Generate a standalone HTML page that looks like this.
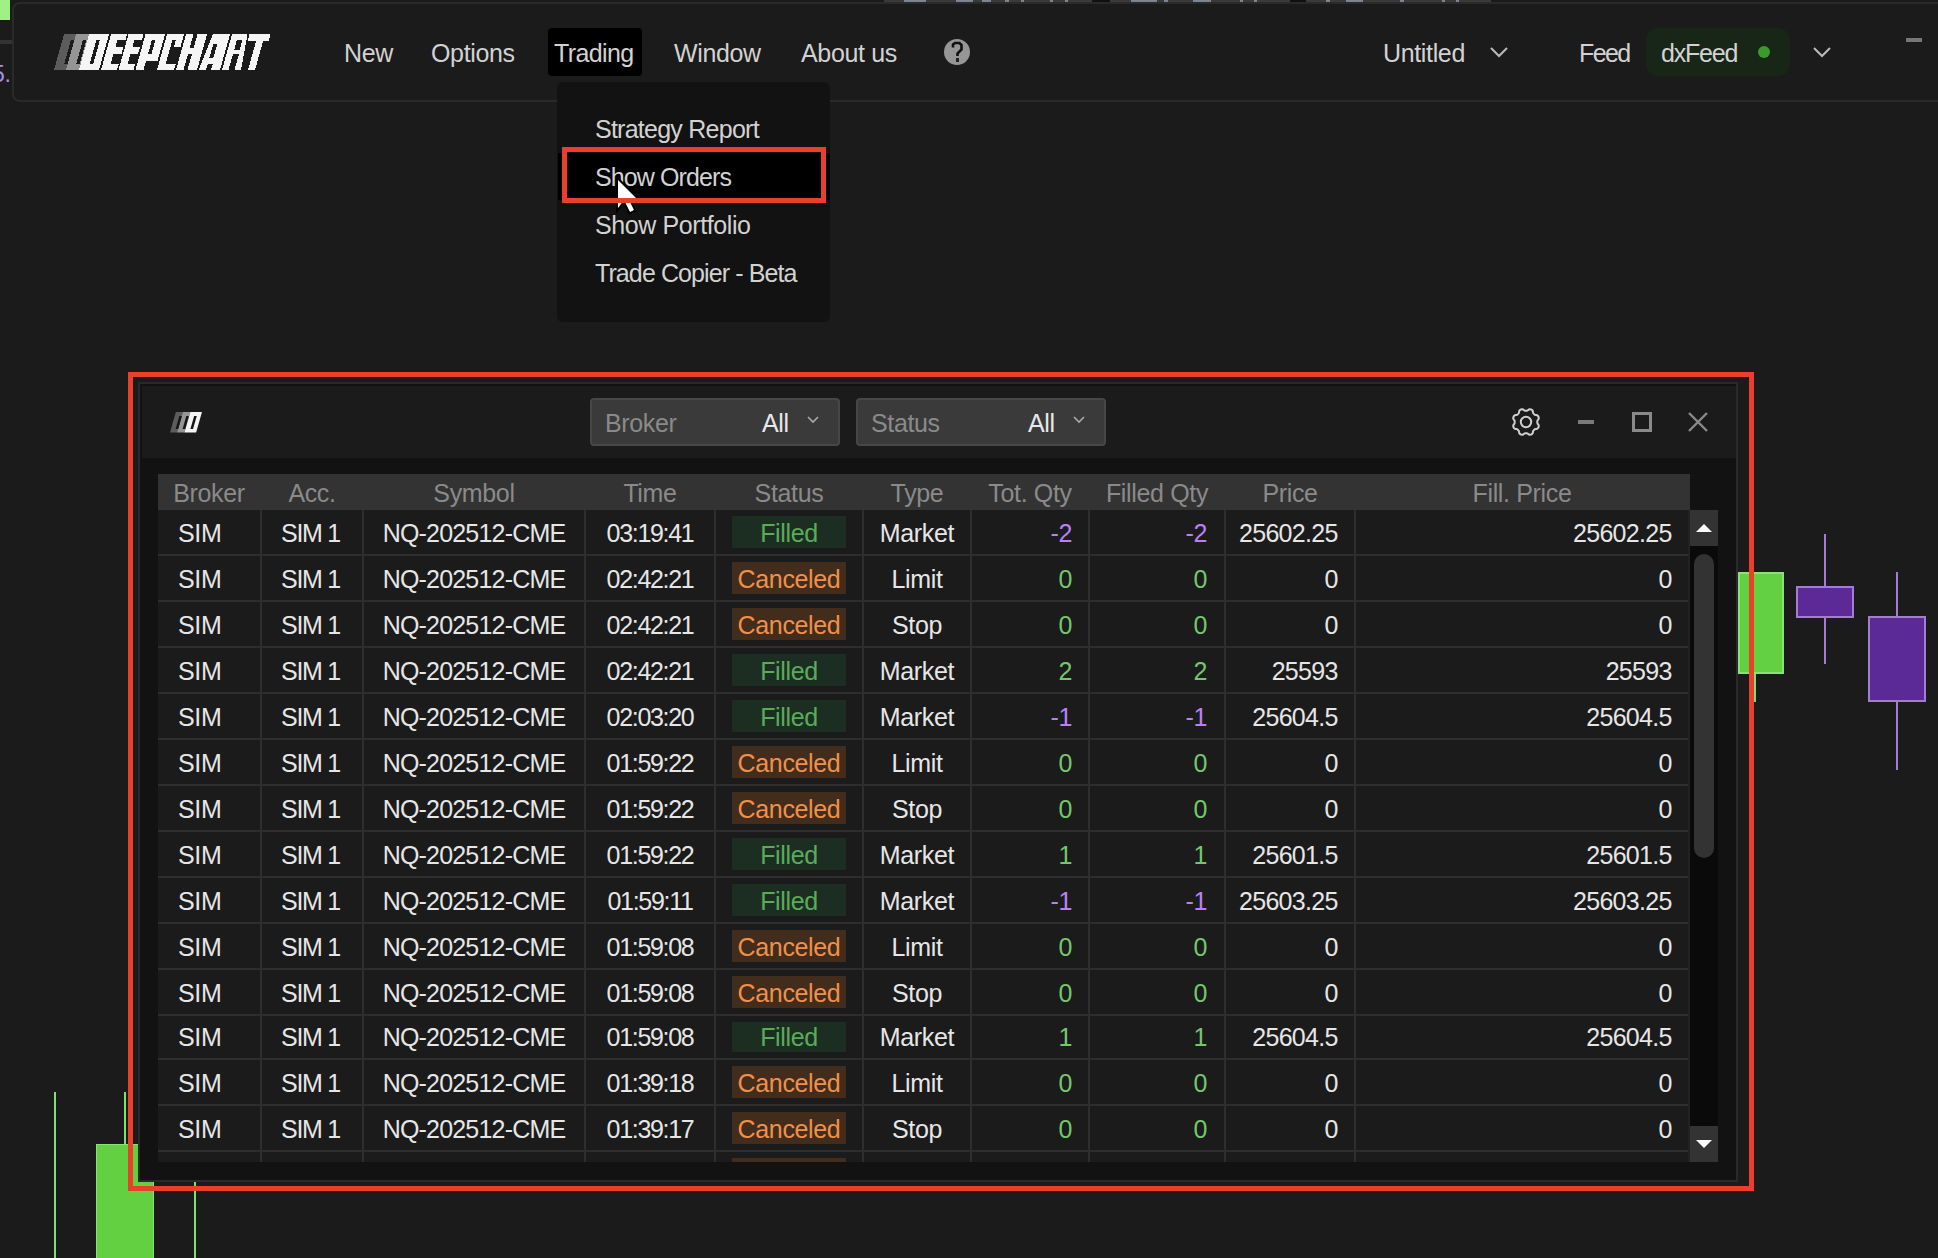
<!DOCTYPE html>
<html><head><meta charset="utf-8">
<style>
*{margin:0;padding:0;box-sizing:border-box}
html,body{width:1938px;height:1258px;overflow:hidden;background:#1b1b1b;font-family:"Liberation Sans",sans-serif;}
.a{position:absolute}
.t{position:absolute;white-space:nowrap;font-size:25px;line-height:28px;letter-spacing:-0.35px}
#topbar{left:12px;top:2px;width:1940px;height:100px;border:2px solid #2a2a2a;border-radius:8px;background:#1b1b1b}
.menu{color:#d2d2d2}
</style></head><body>

<!-- left edge bits -->
<div class="a" style="left:0;top:0;width:10px;height:20px;background:#a0f088"></div>
<div class="a" style="left:0;top:40px;width:12px;height:4px;background:#333"></div>
<div class="t" style="left:-8px;top:60px;color:#a890e0;font-size:23px">5.</div>
<div class="a" style="left:1290px;top:0;width:16px;height:2px;background:#111"></div>
<div class="a" style="left:884px;top:0;width:208px;height:2px;background:#3a3a3a"></div>
<div class="a" style="left:1092px;top:0;width:18px;height:2px;background:#111"></div>
<div class="a" style="left:1110px;top:0;width:180px;height:2px;background:#3a3a3a"></div>
<div class="a" style="left:1306px;top:0;width:185px;height:2px;background:#3a3a3a"></div>

<div class="a" style="left:904px;top:0;width:22px;height:2px;background:#7d8590"></div>
<div class="a" style="left:956px;top:0;width:17px;height:2px;background:#7d8590"></div>
<div class="a" style="left:982px;top:0;width:9px;height:2px;background:#7d8590"></div>
<div class="a" style="left:1005px;top:0;width:4px;height:2px;background:#7d8590"></div>
<div class="a" style="left:1021px;top:0;width:3px;height:2px;background:#7d8590"></div>
<div class="a" style="left:1050px;top:0;width:3px;height:2px;background:#7d8590"></div>
<div class="a" style="left:1065px;top:0;width:3px;height:2px;background:#7d8590"></div>
<div class="a" style="left:1131px;top:0;width:26px;height:2px;background:#7d8590"></div>
<div class="a" style="left:1164px;top:0;width:4px;height:2px;background:#7d8590"></div>
<div class="a" style="left:1193px;top:0;width:18px;height:2px;background:#7d8590"></div>
<div class="a" style="left:1240px;top:0;width:3px;height:2px;background:#7d8590"></div>
<div class="a" style="left:1254px;top:0;width:3px;height:2px;background:#7d8590"></div>
<div class="a" style="left:1326px;top:0;width:4px;height:2px;background:#7d8590"></div>
<div class="a" style="left:1346px;top:0;width:17px;height:2px;background:#7d8590"></div>
<div class="a" style="left:1400px;top:0;width:4px;height:2px;background:#7d8590"></div>
<div class="a" style="left:1442px;top:0;width:3px;height:2px;background:#7d8590"></div>
<div class="a" style="left:1456px;top:0;width:3px;height:2px;background:#7d8590"></div>
<!-- top bar -->
<div id="topbar" class="a"></div>

<!-- logo -->
<svg class="a" style="left:0;top:0" width="300" height="100" viewBox="0 0 300 100">
<g transform="matrix(1 0 -0.28 1 19.6 0)" shape-rendering="crispEdges">
<rect x="54" y="34" width="12" height="36" fill="#5c5c5c"/>
<rect x="66" y="34" width="13" height="36" fill="#959595"/>
<rect x="79" y="34" width="20" height="36" fill="#f5f5f5"/>
<rect x="62.5" y="40" width="3.5" height="24" fill="#1b1b1b"/>
<rect x="74.5" y="40" width="3.5" height="24" fill="#1b1b1b"/>
<rect x="88" y="40" width="3.5" height="24" fill="#1b1b1b"/>
<path fill="#f5f5f5" fill-rule="evenodd" d="M101,34h16v36h-16z M109,40h8v7h-8z M109,54h8v10h-8z"/>
<path fill="#f5f5f5" fill-rule="evenodd" d="M118.5,34h15v36h-15z M126,40h7.5v7h-7.5z M126,54h7.5v10h-7.5z"/>
<path fill="#f5f5f5" fill-rule="evenodd" d="M135.5,34h19.5v26.5h-11.5v9.5h-8z M143.5,40h3.5v14h-3.5z"/>
<path fill="#f5f5f5" fill-rule="evenodd" d="M157,34h17v12.5h-6.5v-6.5h-3.5v24h10v6h-17z"/>
<path fill="#f5f5f5" d="M176,34h7.5v14h4v-14h9.5v36h-9.5v-16h-4v16h-7.5z"/>
<path fill="#f5f5f5" fill-rule="evenodd" d="M198.5,70L203,34h17v36h-9v-6h-5v6h-7.5z M206,44h4v14h-4z"/>
<path fill="#f5f5f5" fill-rule="evenodd" d="M222,34h15.5L241,70h-6.5v-16h-6v16h-6.5z M228.5,40h5.5v9.5h-5.5z"/>
<path fill="#f5f5f5" d="M239.5,34h21v6.5h-5.5v29.5h-7v-29.5h-8.5z"/>
</g>
</svg>

<div class="t menu" style="left:344px;top:39px">New</div>
<div class="t menu" style="left:431px;top:39px">Options</div>
<div class="a" style="left:548px;top:28px;width:94px;height:48px;background:#000;border-radius:4px"></div>
<div class="t menu" style="left:554px;top:39px;letter-spacing:-0.6px">Trading</div>
<div class="t menu" style="left:674px;top:39px">Window</div>
<div class="t menu" style="left:801px;top:39px">About us</div>
<div class="a" style="left:944px;top:39px;width:26px;height:26px;border-radius:50%;background:#969696"></div>
<svg class="a" style="left:940px;top:36px" width="34" height="34" viewBox="940 36 34 34"><path d="M953,47.5 L953,44.5 L955,43 L959.5,43 L961.5,45 L961.5,49.5 L957.5,53.5 L957.5,56" fill="none" stroke="#111" stroke-width="2.6" stroke-linejoin="miter"/><rect x="956" y="58" width="3" height="4" fill="#222"/></svg>

<div class="t menu" style="left:1383px;top:39px">Untitled</div>
<svg class="a" style="left:1488px;top:44px" width="22" height="16"><polyline points="3,4 11,12 19,4" fill="none" stroke="#bbb" stroke-width="2"/></svg>
<div class="t menu" style="left:1579px;top:39px;letter-spacing:-1.6px">Feed</div>
<div class="a" style="left:1646px;top:28px;width:144px;height:48px;background:#172617;border-radius:12px"></div>
<div class="t menu" style="left:1661px;top:39px;letter-spacing:-1.2px">dxFeed</div>
<div class="a" style="left:1758px;top:46px;width:12px;height:12px;border-radius:50%;background:#3a9a2a"></div>
<svg class="a" style="left:1811px;top:44px" width="22" height="16"><polyline points="3,4 11,12 19,4" fill="none" stroke="#bbb" stroke-width="2"/></svg>
<div class="a" style="left:1906px;top:38px;width:16px;height:4px;background:#777"></div>

<!-- dropdown -->
<div class="a" style="left:557px;top:82px;width:273px;height:240px;background:#121212;border-radius:6px"></div>
<div class="a" style="left:558px;top:153px;width:272px;height:47px;background:#000"></div>
<div class="t menu" style="left:595px;top:115px;letter-spacing:-0.75px">Strategy Report</div>
<div class="t menu" style="left:595px;top:163px;letter-spacing:-0.9px">Show Orders</div>
<div class="t menu" style="left:595px;top:211px;letter-spacing:-0.4px">Show Portfolio</div>
<div class="t menu" style="left:595px;top:259px;letter-spacing:-0.9px">Trade Copier - Beta</div>
<!-- cursor -->
<svg class="a" style="left:610px;top:172px" width="36" height="48" viewBox="0 0 36 48">
  <polygon points="8,8 26,26 18,26 24,38 20,40 14,28 8,36" fill="#000" stroke="#000" stroke-width="4" stroke-linejoin="miter"/>
  <polygon points="8,8 26,26 18,26 24,38 20,40 14,28 8,36" fill="#fff"/>
</svg>
<div class="a" style="left:562px;top:147px;width:264px;height:56px;border:5px solid #e8402a"></div>



<div class="a" style="left:54px;top:1092px;width:2px;height:170px;background:#7ee070"></div>
<div class="a" style="left:124px;top:1092px;width:2px;height:60px;background:#7ee070"></div>
<div class="a" style="left:96px;top:1144px;width:58px;height:120px;background:#62d040;border:1px solid #8be07a;border-bottom:none"></div>
<div class="a" style="left:194px;top:1150px;width:2px;height:110px;background:#7ee070"></div>
<div class="a" style="left:1754px;top:660px;width:2px;height:42px;background:#7ee070"></div>
<div class="a" style="left:1738px;top:572px;width:46px;height:102px;background:#62d040;border:2px solid #8be07a"></div>
<div class="a" style="left:1824px;top:534px;width:2px;height:130px;background:#a47dd0"></div>
<div class="a" style="left:1796px;top:586px;width:58px;height:32px;background:#5b2a96;border:2px solid #a47dd0"></div>
<div class="a" style="left:1896px;top:572px;width:2px;height:198px;background:#a47dd0"></div>
<div class="a" style="left:1868px;top:616px;width:58px;height:86px;background:#5b2a96;border:2px solid #a47dd0"></div>
<div class="a" style="left:138px;top:382px;width:1600px;height:800px;border:2px solid #2a2a2a;background:#121212"></div>
<div class="a" style="left:142px;top:386px;width:1594px;height:72px;background:#1b1b1b"></div>
<svg class="a" style="left:170px;top:412px" width="32.5" height="20.5" viewBox="54 34 56 36" preserveAspectRatio="none">
<g transform="matrix(1 0 -0.28 1 19.6 0)">
<rect x="54" y="34" width="12" height="36" fill="#5c5c5c"/>
<rect x="66" y="34" width="13" height="36" fill="#959595"/>
<rect x="79" y="34" width="20" height="36" fill="#f5f5f5"/>
<rect x="62" y="41" width="4.5" height="23" fill="#151515"/>
<rect x="74" y="41" width="4.5" height="23" fill="#151515"/>
<rect x="87.5" y="41" width="4.5" height="23" fill="#151515"/>
</g></svg>
<div class="a" style="left:590px;top:398px;width:250px;height:48px;background:#3a3a3a;border:2px solid #474747;border-radius:4px"></div>
<div class="t" style="left:605px;top:409px;color:#8a8a8a">Broker</div>
<div class="t" style="left:762px;top:409px;color:#e8e8e8">All</div>
<svg class="a" style="left:806px;top:414px" width="14" height="12"><polyline points="2,3 7,8 12,3" fill="none" stroke="#aaa" stroke-width="1.6"/></svg>
<div class="a" style="left:856px;top:398px;width:250px;height:48px;background:#3a3a3a;border:2px solid #474747;border-radius:4px"></div>
<div class="t" style="left:871px;top:409px;color:#8a8a8a">Status</div>
<div class="t" style="left:1028px;top:409px;color:#e8e8e8">All</div>
<svg class="a" style="left:1072px;top:414px" width="14" height="12"><polyline points="2,3 7,8 12,3" fill="none" stroke="#aaa" stroke-width="1.6"/></svg>
<svg class="a" style="left:1506px;top:402px" width="40" height="40" viewBox="0 0 40 40">
<path d="M31.30,20.00 L31.31,20.44 L31.35,20.89 L31.46,21.36 L31.73,21.86 L32.16,22.42 L32.57,23.02 L32.76,23.60 L32.76,24.15 L32.65,24.67 L32.47,25.17 L32.24,25.64 L31.96,26.09 L31.57,26.48 L31.02,26.75 L30.31,26.89 L29.61,26.98 L29.06,27.14 L28.65,27.39 L28.31,27.68 L27.99,27.99 L27.68,28.31 L27.39,28.65 L27.14,29.06 L26.98,29.61 L26.89,30.31 L26.75,31.02 L26.48,31.57 L26.09,31.96 L25.64,32.24 L25.17,32.47 L24.67,32.65 L24.15,32.76 L23.60,32.76 L23.02,32.57 L22.42,32.16 L21.86,31.73 L21.36,31.46 L20.89,31.35 L20.44,31.31 L20.00,31.30 L19.56,31.31 L19.11,31.35 L18.64,31.46 L18.14,31.73 L17.58,32.16 L16.98,32.57 L16.40,32.76 L15.85,32.76 L15.33,32.65 L14.83,32.47 L14.36,32.24 L13.91,31.96 L13.52,31.57 L13.25,31.02 L13.11,30.31 L13.02,29.61 L12.86,29.06 L12.61,28.65 L12.32,28.31 L12.01,27.99 L11.69,27.68 L11.35,27.39 L10.94,27.14 L10.39,26.98 L9.69,26.89 L8.98,26.75 L8.43,26.48 L8.04,26.09 L7.76,25.64 L7.53,25.17 L7.35,24.67 L7.24,24.15 L7.24,23.60 L7.43,23.02 L7.84,22.42 L8.27,21.86 L8.54,21.36 L8.65,20.89 L8.69,20.44 L8.70,20.00 L8.69,19.56 L8.65,19.11 L8.54,18.64 L8.27,18.14 L7.84,17.58 L7.43,16.98 L7.24,16.40 L7.24,15.85 L7.35,15.33 L7.53,14.83 L7.76,14.36 L8.04,13.91 L8.43,13.52 L8.98,13.25 L9.69,13.11 L10.39,13.02 L10.94,12.86 L11.35,12.61 L11.69,12.32 L12.01,12.01 L12.32,11.69 L12.61,11.35 L12.86,10.94 L13.02,10.39 L13.11,9.69 L13.25,8.98 L13.52,8.43 L13.91,8.04 L14.36,7.76 L14.83,7.53 L15.33,7.35 L15.85,7.24 L16.40,7.24 L16.98,7.43 L17.58,7.84 L18.14,8.27 L18.64,8.54 L19.11,8.65 L19.56,8.69 L20.00,8.70 L20.44,8.69 L20.89,8.65 L21.36,8.54 L21.86,8.27 L22.42,7.84 L23.02,7.43 L23.60,7.24 L24.15,7.24 L24.67,7.35 L25.17,7.53 L25.64,7.76 L26.09,8.04 L26.48,8.43 L26.75,8.98 L26.89,9.69 L26.98,10.39 L27.14,10.94 L27.39,11.35 L27.68,11.69 L27.99,12.01 L28.31,12.32 L28.65,12.61 L29.06,12.86 L29.61,13.02 L30.31,13.11 L31.02,13.25 L31.57,13.52 L31.96,13.91 L32.24,14.36 L32.47,14.83 L32.65,15.33 L32.76,15.85 L32.76,16.40 L32.57,16.98 L32.16,17.58 L31.73,18.14 L31.46,18.64 L31.35,19.11 L31.31,19.56Z" fill="none" stroke="#cfcfcf" stroke-width="2"/>
<circle cx="20" cy="20" r="5.2" fill="none" stroke="#cfcfcf" stroke-width="2"/>
</svg>
<div class="a" style="left:1578px;top:420px;width:16px;height:4px;background:#7a7a7a"></div>
<div class="a" style="left:1632px;top:412px;width:20px;height:20px;border:3px solid #8a8a8a"></div>
<svg class="a" style="left:1686px;top:410px" width="24" height="24" viewBox="0 0 24 24">
<path d="M3,3 L21,21 M21,3 L3,21" stroke="#8a8a8a" stroke-width="2.4"/>
</svg>
<div class="a" style="left:158px;top:474px;width:1532px;height:36px;background:#333333"></div>
<div class="t" style="left:158px;top:479px;width:102px;text-align:center;color:#8a8a8a">Broker</div>
<div class="t" style="left:262px;top:479px;width:100px;text-align:center;color:#8a8a8a">Acc.</div>
<div class="t" style="left:364px;top:479px;width:220px;text-align:center;color:#8a8a8a">Symbol</div>
<div class="t" style="left:586px;top:479px;width:128px;text-align:center;color:#8a8a8a">Time</div>
<div class="t" style="left:716px;top:479px;width:146px;text-align:center;color:#8a8a8a">Status</div>
<div class="t" style="left:864px;top:479px;width:106px;text-align:center;color:#8a8a8a">Type</div>
<div class="t" style="left:972px;top:479px;width:116px;text-align:center;color:#8a8a8a">Tot. Qty</div>
<div class="t" style="left:1090px;top:479px;width:134px;text-align:center;color:#8a8a8a">Filled Qty</div>
<div class="t" style="left:1226px;top:479px;width:128px;text-align:center;color:#8a8a8a">Price</div>
<div class="t" style="left:1356px;top:479px;width:332px;text-align:center;color:#8a8a8a">Fill. Price</div>
<div class="a" style="left:158px;top:510px;width:1530px;height:652px;overflow:hidden">
<div class="a" style="left:0;top:0;width:1530px;height:652px;background:#1b1b1b"></div>
<div class="a" style="left:0;top:44px;width:1530px;height:2px;background:#2e2e2e"></div>
<div class="t" style="left:20px;top:9px;color:#e6e6e6;">SIM</div>
<div class="t" style="left:102.5px;top:9px;width:100px;text-align:center;color:#e6e6e6;letter-spacing:-1.3px;">SIM 1</div>
<div class="t" style="left:206px;top:9px;width:220px;text-align:center;color:#e6e6e6;letter-spacing:-0.8px;">NQ-202512-CME</div>
<div class="t" style="left:428px;top:9px;width:128px;text-align:center;color:#e6e6e6;letter-spacing:-1.3px;">03:19:41</div>
<div class="a" style="left:574px;top:6px;width:114px;height:32px;background:#1c2e22"></div>
<div class="t" style="left:574px;top:9px;width:114px;text-align:center;color:#5aab5a">Filled</div>
<div class="t" style="left:706px;top:9px;width:106px;text-align:center;color:#e6e6e6;">Market</div>
<div class="t" style="left:814px;top:9px;width:100px;text-align:right;color:#bb80f8;">-2</div>
<div class="t" style="left:932px;top:9px;width:117px;text-align:right;color:#bb80f8;">-2</div>
<div class="t" style="left:1068px;top:9px;width:111.7px;text-align:right;color:#e6e6e6;letter-spacing:-0.7px;">25602.25</div>
<div class="t" style="left:1198px;top:9px;width:315.7px;text-align:right;color:#e6e6e6;letter-spacing:-0.7px;">25602.25</div>
<div class="a" style="left:0;top:90px;width:1530px;height:2px;background:#2e2e2e"></div>
<div class="t" style="left:20px;top:55px;color:#e6e6e6;">SIM</div>
<div class="t" style="left:102.5px;top:55px;width:100px;text-align:center;color:#e6e6e6;letter-spacing:-1.3px;">SIM 1</div>
<div class="t" style="left:206px;top:55px;width:220px;text-align:center;color:#e6e6e6;letter-spacing:-0.8px;">NQ-202512-CME</div>
<div class="t" style="left:428px;top:55px;width:128px;text-align:center;color:#e6e6e6;letter-spacing:-1.3px;">02:42:21</div>
<div class="a" style="left:574px;top:52px;width:114px;height:32px;background:#422c1c"></div>
<div class="t" style="left:574px;top:55px;width:114px;text-align:center;color:#f0904a">Canceled</div>
<div class="t" style="left:706px;top:55px;width:106px;text-align:center;color:#e6e6e6;">Limit</div>
<div class="t" style="left:814px;top:55px;width:100px;text-align:right;color:#72c86a;">0</div>
<div class="t" style="left:932px;top:55px;width:117px;text-align:right;color:#72c86a;">0</div>
<div class="t" style="left:1068px;top:55px;width:111.7px;text-align:right;color:#e6e6e6;letter-spacing:-0.7px;">0</div>
<div class="t" style="left:1198px;top:55px;width:315.7px;text-align:right;color:#e6e6e6;letter-spacing:-0.7px;">0</div>
<div class="a" style="left:0;top:136px;width:1530px;height:2px;background:#2e2e2e"></div>
<div class="t" style="left:20px;top:101px;color:#e6e6e6;">SIM</div>
<div class="t" style="left:102.5px;top:101px;width:100px;text-align:center;color:#e6e6e6;letter-spacing:-1.3px;">SIM 1</div>
<div class="t" style="left:206px;top:101px;width:220px;text-align:center;color:#e6e6e6;letter-spacing:-0.8px;">NQ-202512-CME</div>
<div class="t" style="left:428px;top:101px;width:128px;text-align:center;color:#e6e6e6;letter-spacing:-1.3px;">02:42:21</div>
<div class="a" style="left:574px;top:98px;width:114px;height:32px;background:#422c1c"></div>
<div class="t" style="left:574px;top:101px;width:114px;text-align:center;color:#f0904a">Canceled</div>
<div class="t" style="left:706px;top:101px;width:106px;text-align:center;color:#e6e6e6;">Stop</div>
<div class="t" style="left:814px;top:101px;width:100px;text-align:right;color:#72c86a;">0</div>
<div class="t" style="left:932px;top:101px;width:117px;text-align:right;color:#72c86a;">0</div>
<div class="t" style="left:1068px;top:101px;width:111.7px;text-align:right;color:#e6e6e6;letter-spacing:-0.7px;">0</div>
<div class="t" style="left:1198px;top:101px;width:315.7px;text-align:right;color:#e6e6e6;letter-spacing:-0.7px;">0</div>
<div class="a" style="left:0;top:182px;width:1530px;height:2px;background:#2e2e2e"></div>
<div class="t" style="left:20px;top:147px;color:#e6e6e6;">SIM</div>
<div class="t" style="left:102.5px;top:147px;width:100px;text-align:center;color:#e6e6e6;letter-spacing:-1.3px;">SIM 1</div>
<div class="t" style="left:206px;top:147px;width:220px;text-align:center;color:#e6e6e6;letter-spacing:-0.8px;">NQ-202512-CME</div>
<div class="t" style="left:428px;top:147px;width:128px;text-align:center;color:#e6e6e6;letter-spacing:-1.3px;">02:42:21</div>
<div class="a" style="left:574px;top:144px;width:114px;height:32px;background:#1c2e22"></div>
<div class="t" style="left:574px;top:147px;width:114px;text-align:center;color:#5aab5a">Filled</div>
<div class="t" style="left:706px;top:147px;width:106px;text-align:center;color:#e6e6e6;">Market</div>
<div class="t" style="left:814px;top:147px;width:100px;text-align:right;color:#72c86a;">2</div>
<div class="t" style="left:932px;top:147px;width:117px;text-align:right;color:#72c86a;">2</div>
<div class="t" style="left:1068px;top:147px;width:111.7px;text-align:right;color:#e6e6e6;letter-spacing:-0.7px;">25593</div>
<div class="t" style="left:1198px;top:147px;width:315.7px;text-align:right;color:#e6e6e6;letter-spacing:-0.7px;">25593</div>
<div class="a" style="left:0;top:228px;width:1530px;height:2px;background:#2e2e2e"></div>
<div class="t" style="left:20px;top:193px;color:#e6e6e6;">SIM</div>
<div class="t" style="left:102.5px;top:193px;width:100px;text-align:center;color:#e6e6e6;letter-spacing:-1.3px;">SIM 1</div>
<div class="t" style="left:206px;top:193px;width:220px;text-align:center;color:#e6e6e6;letter-spacing:-0.8px;">NQ-202512-CME</div>
<div class="t" style="left:428px;top:193px;width:128px;text-align:center;color:#e6e6e6;letter-spacing:-1.3px;">02:03:20</div>
<div class="a" style="left:574px;top:190px;width:114px;height:32px;background:#1c2e22"></div>
<div class="t" style="left:574px;top:193px;width:114px;text-align:center;color:#5aab5a">Filled</div>
<div class="t" style="left:706px;top:193px;width:106px;text-align:center;color:#e6e6e6;">Market</div>
<div class="t" style="left:814px;top:193px;width:100px;text-align:right;color:#bb80f8;">-1</div>
<div class="t" style="left:932px;top:193px;width:117px;text-align:right;color:#bb80f8;">-1</div>
<div class="t" style="left:1068px;top:193px;width:111.7px;text-align:right;color:#e6e6e6;letter-spacing:-0.7px;">25604.5</div>
<div class="t" style="left:1198px;top:193px;width:315.7px;text-align:right;color:#e6e6e6;letter-spacing:-0.7px;">25604.5</div>
<div class="a" style="left:0;top:274px;width:1530px;height:2px;background:#2e2e2e"></div>
<div class="t" style="left:20px;top:239px;color:#e6e6e6;">SIM</div>
<div class="t" style="left:102.5px;top:239px;width:100px;text-align:center;color:#e6e6e6;letter-spacing:-1.3px;">SIM 1</div>
<div class="t" style="left:206px;top:239px;width:220px;text-align:center;color:#e6e6e6;letter-spacing:-0.8px;">NQ-202512-CME</div>
<div class="t" style="left:428px;top:239px;width:128px;text-align:center;color:#e6e6e6;letter-spacing:-1.3px;">01:59:22</div>
<div class="a" style="left:574px;top:236px;width:114px;height:32px;background:#422c1c"></div>
<div class="t" style="left:574px;top:239px;width:114px;text-align:center;color:#f0904a">Canceled</div>
<div class="t" style="left:706px;top:239px;width:106px;text-align:center;color:#e6e6e6;">Limit</div>
<div class="t" style="left:814px;top:239px;width:100px;text-align:right;color:#72c86a;">0</div>
<div class="t" style="left:932px;top:239px;width:117px;text-align:right;color:#72c86a;">0</div>
<div class="t" style="left:1068px;top:239px;width:111.7px;text-align:right;color:#e6e6e6;letter-spacing:-0.7px;">0</div>
<div class="t" style="left:1198px;top:239px;width:315.7px;text-align:right;color:#e6e6e6;letter-spacing:-0.7px;">0</div>
<div class="a" style="left:0;top:320px;width:1530px;height:2px;background:#2e2e2e"></div>
<div class="t" style="left:20px;top:285px;color:#e6e6e6;">SIM</div>
<div class="t" style="left:102.5px;top:285px;width:100px;text-align:center;color:#e6e6e6;letter-spacing:-1.3px;">SIM 1</div>
<div class="t" style="left:206px;top:285px;width:220px;text-align:center;color:#e6e6e6;letter-spacing:-0.8px;">NQ-202512-CME</div>
<div class="t" style="left:428px;top:285px;width:128px;text-align:center;color:#e6e6e6;letter-spacing:-1.3px;">01:59:22</div>
<div class="a" style="left:574px;top:282px;width:114px;height:32px;background:#422c1c"></div>
<div class="t" style="left:574px;top:285px;width:114px;text-align:center;color:#f0904a">Canceled</div>
<div class="t" style="left:706px;top:285px;width:106px;text-align:center;color:#e6e6e6;">Stop</div>
<div class="t" style="left:814px;top:285px;width:100px;text-align:right;color:#72c86a;">0</div>
<div class="t" style="left:932px;top:285px;width:117px;text-align:right;color:#72c86a;">0</div>
<div class="t" style="left:1068px;top:285px;width:111.7px;text-align:right;color:#e6e6e6;letter-spacing:-0.7px;">0</div>
<div class="t" style="left:1198px;top:285px;width:315.7px;text-align:right;color:#e6e6e6;letter-spacing:-0.7px;">0</div>
<div class="a" style="left:0;top:366px;width:1530px;height:2px;background:#2e2e2e"></div>
<div class="t" style="left:20px;top:331px;color:#e6e6e6;">SIM</div>
<div class="t" style="left:102.5px;top:331px;width:100px;text-align:center;color:#e6e6e6;letter-spacing:-1.3px;">SIM 1</div>
<div class="t" style="left:206px;top:331px;width:220px;text-align:center;color:#e6e6e6;letter-spacing:-0.8px;">NQ-202512-CME</div>
<div class="t" style="left:428px;top:331px;width:128px;text-align:center;color:#e6e6e6;letter-spacing:-1.3px;">01:59:22</div>
<div class="a" style="left:574px;top:328px;width:114px;height:32px;background:#1c2e22"></div>
<div class="t" style="left:574px;top:331px;width:114px;text-align:center;color:#5aab5a">Filled</div>
<div class="t" style="left:706px;top:331px;width:106px;text-align:center;color:#e6e6e6;">Market</div>
<div class="t" style="left:814px;top:331px;width:100px;text-align:right;color:#72c86a;">1</div>
<div class="t" style="left:932px;top:331px;width:117px;text-align:right;color:#72c86a;">1</div>
<div class="t" style="left:1068px;top:331px;width:111.7px;text-align:right;color:#e6e6e6;letter-spacing:-0.7px;">25601.5</div>
<div class="t" style="left:1198px;top:331px;width:315.7px;text-align:right;color:#e6e6e6;letter-spacing:-0.7px;">25601.5</div>
<div class="a" style="left:0;top:412px;width:1530px;height:2px;background:#2e2e2e"></div>
<div class="t" style="left:20px;top:377px;color:#e6e6e6;">SIM</div>
<div class="t" style="left:102.5px;top:377px;width:100px;text-align:center;color:#e6e6e6;letter-spacing:-1.3px;">SIM 1</div>
<div class="t" style="left:206px;top:377px;width:220px;text-align:center;color:#e6e6e6;letter-spacing:-0.8px;">NQ-202512-CME</div>
<div class="t" style="left:428px;top:377px;width:128px;text-align:center;color:#e6e6e6;letter-spacing:-1.3px;">01:59:11</div>
<div class="a" style="left:574px;top:374px;width:114px;height:32px;background:#1c2e22"></div>
<div class="t" style="left:574px;top:377px;width:114px;text-align:center;color:#5aab5a">Filled</div>
<div class="t" style="left:706px;top:377px;width:106px;text-align:center;color:#e6e6e6;">Market</div>
<div class="t" style="left:814px;top:377px;width:100px;text-align:right;color:#bb80f8;">-1</div>
<div class="t" style="left:932px;top:377px;width:117px;text-align:right;color:#bb80f8;">-1</div>
<div class="t" style="left:1068px;top:377px;width:111.7px;text-align:right;color:#e6e6e6;letter-spacing:-0.7px;">25603.25</div>
<div class="t" style="left:1198px;top:377px;width:315.7px;text-align:right;color:#e6e6e6;letter-spacing:-0.7px;">25603.25</div>
<div class="a" style="left:0;top:458px;width:1530px;height:2px;background:#2e2e2e"></div>
<div class="t" style="left:20px;top:423px;color:#e6e6e6;">SIM</div>
<div class="t" style="left:102.5px;top:423px;width:100px;text-align:center;color:#e6e6e6;letter-spacing:-1.3px;">SIM 1</div>
<div class="t" style="left:206px;top:423px;width:220px;text-align:center;color:#e6e6e6;letter-spacing:-0.8px;">NQ-202512-CME</div>
<div class="t" style="left:428px;top:423px;width:128px;text-align:center;color:#e6e6e6;letter-spacing:-1.3px;">01:59:08</div>
<div class="a" style="left:574px;top:420px;width:114px;height:32px;background:#422c1c"></div>
<div class="t" style="left:574px;top:423px;width:114px;text-align:center;color:#f0904a">Canceled</div>
<div class="t" style="left:706px;top:423px;width:106px;text-align:center;color:#e6e6e6;">Limit</div>
<div class="t" style="left:814px;top:423px;width:100px;text-align:right;color:#72c86a;">0</div>
<div class="t" style="left:932px;top:423px;width:117px;text-align:right;color:#72c86a;">0</div>
<div class="t" style="left:1068px;top:423px;width:111.7px;text-align:right;color:#e6e6e6;letter-spacing:-0.7px;">0</div>
<div class="t" style="left:1198px;top:423px;width:315.7px;text-align:right;color:#e6e6e6;letter-spacing:-0.7px;">0</div>
<div class="a" style="left:0;top:504px;width:1530px;height:2px;background:#2e2e2e"></div>
<div class="t" style="left:20px;top:469px;color:#e6e6e6;">SIM</div>
<div class="t" style="left:102.5px;top:469px;width:100px;text-align:center;color:#e6e6e6;letter-spacing:-1.3px;">SIM 1</div>
<div class="t" style="left:206px;top:469px;width:220px;text-align:center;color:#e6e6e6;letter-spacing:-0.8px;">NQ-202512-CME</div>
<div class="t" style="left:428px;top:469px;width:128px;text-align:center;color:#e6e6e6;letter-spacing:-1.3px;">01:59:08</div>
<div class="a" style="left:574px;top:466px;width:114px;height:32px;background:#422c1c"></div>
<div class="t" style="left:574px;top:469px;width:114px;text-align:center;color:#f0904a">Canceled</div>
<div class="t" style="left:706px;top:469px;width:106px;text-align:center;color:#e6e6e6;">Stop</div>
<div class="t" style="left:814px;top:469px;width:100px;text-align:right;color:#72c86a;">0</div>
<div class="t" style="left:932px;top:469px;width:117px;text-align:right;color:#72c86a;">0</div>
<div class="t" style="left:1068px;top:469px;width:111.7px;text-align:right;color:#e6e6e6;letter-spacing:-0.7px;">0</div>
<div class="t" style="left:1198px;top:469px;width:315.7px;text-align:right;color:#e6e6e6;letter-spacing:-0.7px;">0</div>
<div class="a" style="left:0;top:548px;width:1530px;height:2px;background:#2e2e2e"></div>
<div class="t" style="left:20px;top:513px;color:#e6e6e6;">SIM</div>
<div class="t" style="left:102.5px;top:513px;width:100px;text-align:center;color:#e6e6e6;letter-spacing:-1.3px;">SIM 1</div>
<div class="t" style="left:206px;top:513px;width:220px;text-align:center;color:#e6e6e6;letter-spacing:-0.8px;">NQ-202512-CME</div>
<div class="t" style="left:428px;top:513px;width:128px;text-align:center;color:#e6e6e6;letter-spacing:-1.3px;">01:59:08</div>
<div class="a" style="left:574px;top:512px;width:114px;height:30px;background:#1c2e22"></div>
<div class="t" style="left:574px;top:513px;width:114px;text-align:center;color:#5aab5a">Filled</div>
<div class="t" style="left:706px;top:513px;width:106px;text-align:center;color:#e6e6e6;">Market</div>
<div class="t" style="left:814px;top:513px;width:100px;text-align:right;color:#72c86a;">1</div>
<div class="t" style="left:932px;top:513px;width:117px;text-align:right;color:#72c86a;">1</div>
<div class="t" style="left:1068px;top:513px;width:111.7px;text-align:right;color:#e6e6e6;letter-spacing:-0.7px;">25604.5</div>
<div class="t" style="left:1198px;top:513px;width:315.7px;text-align:right;color:#e6e6e6;letter-spacing:-0.7px;">25604.5</div>
<div class="a" style="left:0;top:594px;width:1530px;height:2px;background:#2e2e2e"></div>
<div class="t" style="left:20px;top:559px;color:#e6e6e6;">SIM</div>
<div class="t" style="left:102.5px;top:559px;width:100px;text-align:center;color:#e6e6e6;letter-spacing:-1.3px;">SIM 1</div>
<div class="t" style="left:206px;top:559px;width:220px;text-align:center;color:#e6e6e6;letter-spacing:-0.8px;">NQ-202512-CME</div>
<div class="t" style="left:428px;top:559px;width:128px;text-align:center;color:#e6e6e6;letter-spacing:-1.3px;">01:39:18</div>
<div class="a" style="left:574px;top:556px;width:114px;height:32px;background:#422c1c"></div>
<div class="t" style="left:574px;top:559px;width:114px;text-align:center;color:#f0904a">Canceled</div>
<div class="t" style="left:706px;top:559px;width:106px;text-align:center;color:#e6e6e6;">Limit</div>
<div class="t" style="left:814px;top:559px;width:100px;text-align:right;color:#72c86a;">0</div>
<div class="t" style="left:932px;top:559px;width:117px;text-align:right;color:#72c86a;">0</div>
<div class="t" style="left:1068px;top:559px;width:111.7px;text-align:right;color:#e6e6e6;letter-spacing:-0.7px;">0</div>
<div class="t" style="left:1198px;top:559px;width:315.7px;text-align:right;color:#e6e6e6;letter-spacing:-0.7px;">0</div>
<div class="a" style="left:0;top:640px;width:1530px;height:2px;background:#2e2e2e"></div>
<div class="t" style="left:20px;top:605px;color:#e6e6e6;">SIM</div>
<div class="t" style="left:102.5px;top:605px;width:100px;text-align:center;color:#e6e6e6;letter-spacing:-1.3px;">SIM 1</div>
<div class="t" style="left:206px;top:605px;width:220px;text-align:center;color:#e6e6e6;letter-spacing:-0.8px;">NQ-202512-CME</div>
<div class="t" style="left:428px;top:605px;width:128px;text-align:center;color:#e6e6e6;letter-spacing:-1.3px;">01:39:17</div>
<div class="a" style="left:574px;top:602px;width:114px;height:32px;background:#422c1c"></div>
<div class="t" style="left:574px;top:605px;width:114px;text-align:center;color:#f0904a">Canceled</div>
<div class="t" style="left:706px;top:605px;width:106px;text-align:center;color:#e6e6e6;">Stop</div>
<div class="t" style="left:814px;top:605px;width:100px;text-align:right;color:#72c86a;">0</div>
<div class="t" style="left:932px;top:605px;width:117px;text-align:right;color:#72c86a;">0</div>
<div class="t" style="left:1068px;top:605px;width:111.7px;text-align:right;color:#e6e6e6;letter-spacing:-0.7px;">0</div>
<div class="t" style="left:1198px;top:605px;width:315.7px;text-align:right;color:#e6e6e6;letter-spacing:-0.7px;">0</div>
<div class="a" style="left:0;top:686px;width:1530px;height:2px;background:#2e2e2e"></div>
<div class="t" style="left:20px;top:651px;color:#e6e6e6;">SIM</div>
<div class="t" style="left:102.5px;top:651px;width:100px;text-align:center;color:#e6e6e6;letter-spacing:-1.3px;">SIM 1</div>
<div class="t" style="left:206px;top:651px;width:220px;text-align:center;color:#e6e6e6;letter-spacing:-0.8px;">NQ-202512-CME</div>
<div class="t" style="left:428px;top:651px;width:128px;text-align:center;color:#e6e6e6;letter-spacing:-1.3px;">01:39:17</div>
<div class="a" style="left:574px;top:648px;width:114px;height:32px;background:#422c1c"></div>
<div class="t" style="left:574px;top:651px;width:114px;text-align:center;color:#f0904a">Canceled</div>
<div class="t" style="left:706px;top:651px;width:106px;text-align:center;color:#e6e6e6;">Limit</div>
<div class="t" style="left:814px;top:651px;width:100px;text-align:right;color:#72c86a;">0</div>
<div class="t" style="left:932px;top:651px;width:117px;text-align:right;color:#72c86a;">0</div>
<div class="t" style="left:1068px;top:651px;width:111.7px;text-align:right;color:#e6e6e6;letter-spacing:-0.7px;">0</div>
<div class="t" style="left:1198px;top:651px;width:315.7px;text-align:right;color:#e6e6e6;letter-spacing:-0.7px;">0</div>
<div class="a" style="left:102px;top:0;width:2px;height:652px;background:#2e2e2e"></div>
<div class="a" style="left:204px;top:0;width:2px;height:652px;background:#2e2e2e"></div>
<div class="a" style="left:426px;top:0;width:2px;height:652px;background:#2e2e2e"></div>
<div class="a" style="left:556px;top:0;width:2px;height:652px;background:#2e2e2e"></div>
<div class="a" style="left:704px;top:0;width:2px;height:652px;background:#2e2e2e"></div>
<div class="a" style="left:812px;top:0;width:2px;height:652px;background:#2e2e2e"></div>
<div class="a" style="left:930px;top:0;width:2px;height:652px;background:#2e2e2e"></div>
<div class="a" style="left:1066px;top:0;width:2px;height:652px;background:#2e2e2e"></div>
<div class="a" style="left:1196px;top:0;width:2px;height:652px;background:#2e2e2e"></div>
</div>
<div class="a" style="left:1688px;top:510px;width:2px;height:652px;background:#222"></div>
<div class="a" style="left:1690px;top:510px;width:28px;height:652px;background:#0a0a0a"></div>
<div class="a" style="left:1690px;top:510px;width:28px;height:36px;background:#333"></div>
<div class="a" style="left:1690px;top:1126px;width:28px;height:36px;background:#333"></div>
<svg class="a" style="left:1690px;top:510px" width="28" height="36"><polygon points="6,22 22,22 14,14" fill="#fff"/></svg>
<svg class="a" style="left:1690px;top:1126px" width="28" height="36"><polygon points="6,14 22,14 14,22" fill="#fff"/></svg>
<div class="a" style="left:1694px;top:554px;width:20px;height:304px;background:#333;border-radius:10px"></div>
<div class="a" style="left:128px;top:372px;width:1626px;height:819px;border:5px solid #e8402a"></div>
</body></html>
